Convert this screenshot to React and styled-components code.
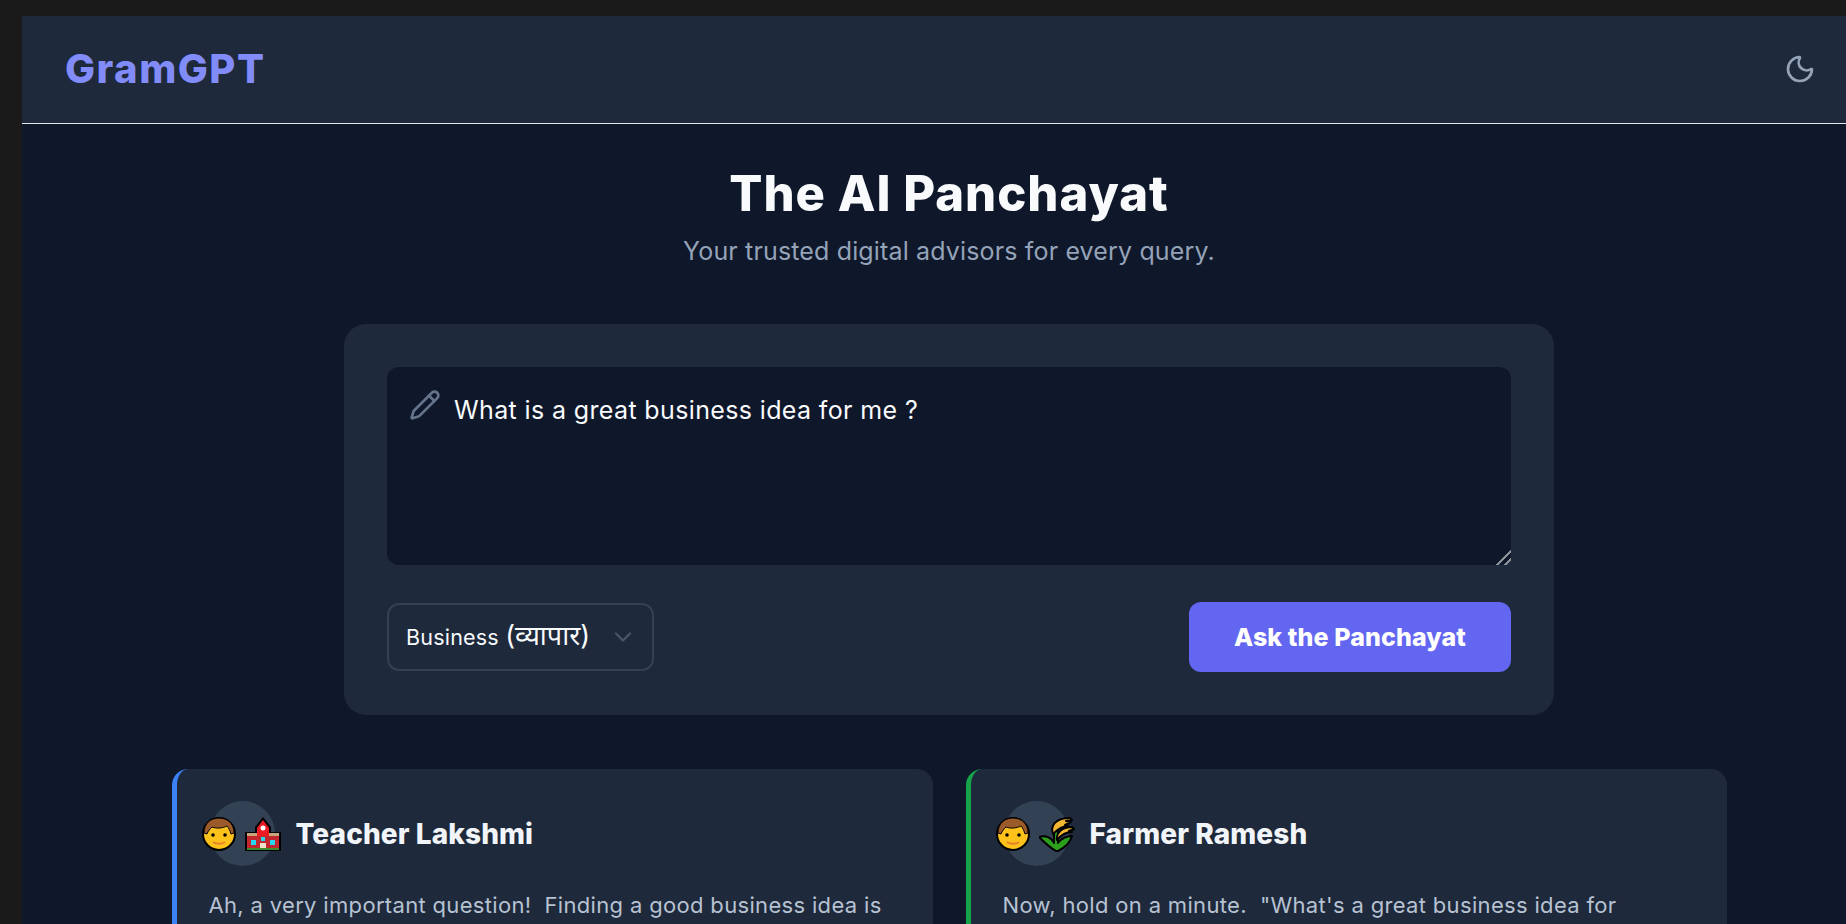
import styled, { createGlobalStyle } from "styled-components";
import { Moon, Pencil, ChevronDown } from "lucide-react";

const GlobalStyle = createGlobalStyle`
  html, body {
    margin: 0;
    height: 100%;
    overflow: hidden;
    background: #1a1a1a;
  }
  body {
    font-family: "Inter", "Noto Sans", sans-serif;
  }
`;

const Frame = styled.div`
  height: 908px;
  margin: 16px 0 0 22px;
  background: #0f172a;
  overflow: hidden;
`;

const Header = styled.header`
  height: 107px;
  display: flex;
  align-items: center;
  justify-content: space-between;
  padding: 0 30px 0 43px;
  background: #1e293b;
  border-bottom: 1px solid #e2e8f0;
`;

const Logo = styled.div`
  margin-top: -3px;
  font-size: 40px;
  font-weight: 800;
  letter-spacing: 1.5px;
  color: #818cf8;
`;

const ThemeToggle = styled.button`
  display: flex;
  margin-top: -2px;
  padding: 0;
  border: 0;
  background: none;
  color: #94a3b8;
`;

const Main = styled.main`
  display: flex;
  flex-direction: column;
  align-items: center;
  padding: 41px 0 0 30px;
`;

const Title = styled.h1`
  margin: 0;
  font-size: 49px;
  line-height: 58px;
  font-weight: 800;
  letter-spacing: 1px;
  color: #f8fafc;
`;

const Subtitle = styled.p`
  margin: 10px 0 0;
  font-size: 25px;
  line-height: 36px;
  letter-spacing: 0.15px;
  color: #94a3b8;
`;

const AskCard = styled.section`
  box-sizing: border-box;
  width: 1210px;
  height: 391px;
  margin-top: 55px;
  padding: 43px;
  background: #1e293b;
  border-radius: 22px;
`;

const InputWrap = styled.div`
  position: relative;
  display: flex;
`;

const PencilMark = styled(Pencil)`
  position: absolute;
  top: 22px;
  left: 22px;
  color: #64748b;
`;

const Question = styled.textarea`
  box-sizing: border-box;
  width: 100%;
  height: 198px;
  padding: 25px 20px 20px 67px;
  border: 0;
  border-radius: 12px;
  outline: none;
  resize: vertical;
  background: #0f172a;
  color: #f8fafc;
  font-family: inherit;
  font-size: 25px;
  line-height: 36px;
  letter-spacing: 0.37px;

  &::-webkit-resizer {
    background: linear-gradient(
      135deg,
      transparent 47%,
      #8a8f98 47%,
      #8a8f98 58%,
      transparent 58%,
      transparent 74%,
      #8a8f98 74%,
      #8a8f98 85%,
      transparent 85%
    );
  }
`;

const Controls = styled.div`
  display: flex;
  align-items: center;
  justify-content: space-between;
  margin-top: 37px;
`;

const TopicButton = styled.button`
  box-sizing: border-box;
  display: flex;
  align-items: center;
  justify-content: space-between;
  width: 267px;
  height: 68px;
  padding: 0 15px 0 17px;
  border: 2px solid #334155;
  border-radius: 12px;
  background: #1e293b;
  color: #f8fafc;
  font-family: inherit;
  font-size: 21.5px;
  line-height: 30px;
  letter-spacing: 0.2px;
  white-space: nowrap;
`;

const Hindi = styled.span`
  font-size: 27px;
  line-height: 0;
  letter-spacing: 0;
`;

const Chevron = styled(ChevronDown)`
  flex: none;
  color: #475569;
`;

const AskButton = styled.button`
  width: 322px;
  height: 70px;
  border: 0;
  border-radius: 12px;
  background: #6366f1;
  color: #fff;
  font-family: inherit;
  font-size: 25px;
  font-weight: 800;
  letter-spacing: 0.1px;
`;

const Advisors = styled.div`
  display: grid;
  grid-template-columns: repeat(2, 761px);
  gap: 33px;
  margin-top: 54px;
`;

const AdvisorCard = styled.article`
  box-sizing: border-box;
  height: 400px;
  padding: 32px 30px 0 33px;
  background: #1e293b;
  border-left: 5px solid ${(p) => p.$accent};
  border-radius: 16px;
`;

const AdvisorHead = styled.div`
  display: flex;
  align-items: center;
  height: 65px;
`;

const Avatar = styled.div`
  box-sizing: border-box;
  flex: none;
  display: flex;
  align-items: center;
  justify-content: center;
  gap: 8px;
  width: 65px;
  height: 65px;
  margin-right: 21px;
  padding-right: 2px;
  border-radius: 50%;
  background: #334155;
`;

const AdvisorName = styled.h2`
  margin: 0;
  font-size: 28px;
  font-weight: 800;
  letter-spacing: 0.1px;
  color: #f1f5f9;
`;

const AdvisorText = styled.p`
  margin: 21px 0 0 -1px;
  font-size: 22px;
  line-height: 36px;
  letter-spacing: 0.33px;
  color: #b6c2d2;
  white-space: pre-wrap;
`;

const EmojiSvg = styled.svg`
  flex: none;
  width: 36px;
  height: 36px;
`;

function BoyEmoji() {
  return (
    <EmojiSvg viewBox="0 0 36 36">
      <circle cx="18" cy="18" r="16" fill="#fcc21b" stroke="#000" strokeWidth="2" />
      <path d="M3 17C3 7 10 2 18 2s15 5 15 15l-3 1c-1-3-2-6-4-8-4 2-10 3-15 1-2 2-4 4-5 7z" fill="#9b5a2a" stroke="#000" strokeWidth="1" />
      <circle cx="12" cy="19" r="1.8" fill="#000" />
      <circle cx="24" cy="19" r="1.8" fill="#000" />
      <path d="M12 26c3 2.400 9 2.400 12 0" fill="none" stroke="#e8802a" strokeWidth="2" />
    </EmojiSvg>
  );
}

function SchoolEmoji() {
  return (
    <EmojiSvg viewBox="0 0 36 36">
      <path d="M0 35V16h10v-5l8-10 8 10v5h10v19z" fill="#000" />
      <path d="M2 32V19h32v13z" fill="#c1272d" />
      <path d="M2 17h32v3H2z" fill="#c8a67a" />
      <path d="M12 20v-8l6-8 6 8v8z" fill="#ed1c24" />
      <circle cx="18" cy="12" r="2.500" fill="#fff" />
      <path d="M6 24h5v5H6zM25 24h5v5h-5zM16 21h4v4h-4z" fill="#29d6f0" />
      <path d="M15 27h6v5h-6z" fill="#f3dfc8" />
      <path d="M2 32h32v2H2z" fill="#3f8f2f" />
    </EmojiSvg>
  );
}

function RiceEmoji() {
  return (
    <EmojiSvg viewBox="0 0 36 36">
      <path d="M17 35C10 31 5 26 0 21c7-2 13 1 15 6V14h4v13c3-4 7-7 14-7-2 7-8 12-14 15z" fill="#2ca01c" stroke="#000" strokeWidth="2" strokeLinejoin="round" />
      <path d="M14 18c-3-9 3-16 17-16l2 2-6 1 5 1-6 3 3 1c-5 0-10 3-15 8z" fill="#f2b632" stroke="#000" strokeWidth="2" strokeLinejoin="round" />
      <path d="M18 24c-1-7 5-13 15-13l2 2-5 2 3 1c-5 0-11 3-15 8z" fill="#f2b632" stroke="#000" strokeWidth="2" strokeLinejoin="round" />
    </EmojiSvg>
  );
}

const advisors = [
  {
    name: "Teacher Lakshmi",
    accent: "#3b82f6",
    Icon: SchoolEmoji,
    text: "Ah, a very important question!  Finding a good business idea is",
  },
  {
    name: "Farmer Ramesh",
    accent: "#16a34a",
    Icon: RiceEmoji,
    text: 'Now, hold on a minute.  "What\'s a great business idea for',
  },
];

export default function App() {
  return (
    <>
      <GlobalStyle />
      <Frame>
        <Header>
          <Logo>GramGPT</Logo>
          <ThemeToggle aria-label="Toggle theme">
            <Moon size={32} strokeWidth={2} />
          </ThemeToggle>
        </Header>
        <Main>
          <Title>The AI Panchayat</Title>
          <Subtitle>Your trusted digital advisors for every query.</Subtitle>
          <AskCard>
            <InputWrap>
              <PencilMark size={32} strokeWidth={2} />
              <Question defaultValue="What is a great business idea for me ?" />
            </InputWrap>
            <Controls>
              <TopicButton>
                <span>
                  Business <Hindi>(व्यापार)</Hindi>
                </span>
                <Chevron size={28} />
              </TopicButton>
              <AskButton>Ask the Panchayat</AskButton>
            </Controls>
          </AskCard>
          <Advisors>
            {advisors.map(({ name, accent, Icon, text }) => (
              <AdvisorCard key={name} $accent={accent}>
                <AdvisorHead>
                  <Avatar>
                    <BoyEmoji />
                    <Icon />
                  </Avatar>
                  <AdvisorName>{name}</AdvisorName>
                </AdvisorHead>
                <AdvisorText>{text}</AdvisorText>
              </AdvisorCard>
            ))}
          </Advisors>
        </Main>
      </Frame>
    </>
  );
}
